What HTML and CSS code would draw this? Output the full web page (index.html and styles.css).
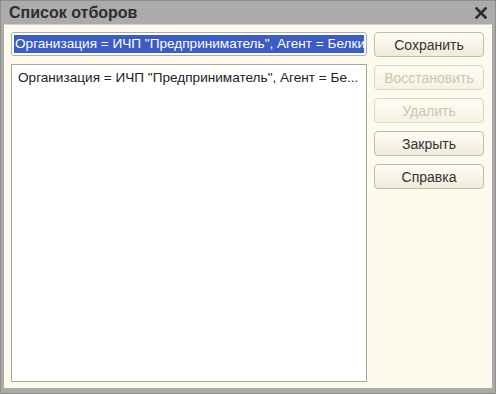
FILE: index.html
```html
<!DOCTYPE html>
<html lang="ru">
<head>
  <meta charset="UTF-8">
  <title>Список отборов</title>
  <link rel="stylesheet" href="styles.css">
</head>
<body>

  <div class="window">
    <div class="titlebar">
      <span class="title">Список отборов</span>
      <span class="close">
        <svg width="12" height="12" viewBox="0 0 12 12"><path d="M1.5 1.5 L10.5 10.5 M10.5 1.5 L1.5 10.5" stroke="#2b2b2b" stroke-width="2.6" stroke-linecap="square"/></svg>
      </span>
    </div>

    <div class="window-body">
      <div class="main-col">
        <div class="name-field">
          <span class="name-selected">Организация = ИЧП "Предприниматель", Агент = Белкин</span>
        </div>
        <div class="filter-list">
          <div class="filter-item">Организация = ИЧП "Предприниматель", Агент = Бе...</div>
        </div>
      </div>

      <div class="btn-col">
        <button type="button" class="btn">Сохранить</button>
        <button type="button" class="btn" disabled>Восстановить</button>
        <button type="button" class="btn" disabled>Удалить</button>
        <button type="button" class="btn">Закрыть</button>
        <button type="button" class="btn">Справка</button>
      </div>
    </div>
  </div>

</body>
</html>
```

FILE: styles.css
```css
html, body {
  margin: 0;
  padding: 0;
}
body {
  font-family: "Liberation Sans", Arial, sans-serif;
  font-size: 13.6px;
  color: #222;
}
.window {
  box-sizing: border-box;
  width: 496px;
  height: 394px;
  display: flex;
  flex-direction: column;
  background: #ababab;
  border: 1px solid #8e8e8e;
}
.titlebar {
  height: 23px;
  display: flex;
  align-items: center;
  justify-content: space-between;
  padding: 0 8px 0 8px;
}
.title {
  font-weight: bold;
  font-size: 16px;
  color: #2e2e2e;
}
.close {
  display: flex;
}
.window-body {
  flex: 1;
  display: flex;
  gap: 7px;
  margin: 0 3px 5px 3px;
  padding: 7px 8px 6px 7px;
  background: #fffaee;
  border-top: 1px solid #d8d4c8;
}
.main-col {
  flex: 1;
  min-width: 0;
  display: flex;
  flex-direction: column;
  gap: 8px;
}
.name-field {
  box-sizing: border-box;
  height: 24px;
  padding: 2px;
  background: #fff;
  border: 1px solid #a9adb8;
  border-radius: 3px;
  display: flex;
  overflow: hidden;
}
.name-selected {
  flex: 1;
  min-width: 0;
  background: #3b5cc4;
  color: #fff;
  white-space: nowrap;
  overflow: hidden;
  line-height: 18px;
  padding-left: 1px;
}
.filter-list {
  flex: 1;
  background: #fff;
  border: 1px solid #aaa68f;
}
.filter-item {
  padding: 5px 6px;
  white-space: nowrap;
  overflow: hidden;
}
.btn-col {
  flex: none;
  width: 110px;
  display: flex;
  flex-direction: column;
  gap: 8px;
}
.btn {
  height: 25px;
  padding: 0;
  font-family: inherit;
  font-size: 14px;
  color: #333;
  border: 1px solid #c2bba6;
  border-radius: 4px;
  background: linear-gradient(#fffdf6, #f0ebda);
}
.btn:disabled {
  color: #cfc5ad;
  border-color: #ddd6c4;
  background: linear-gradient(#fffcf4, #f6f1e2);
}
```
